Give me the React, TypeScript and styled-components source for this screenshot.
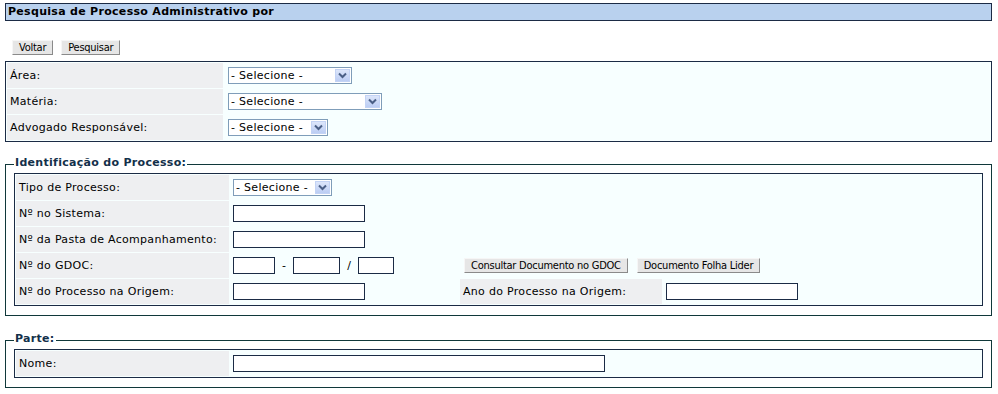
import styled, { createGlobalStyle } from 'styled-components'

const GlobalStyle = createGlobalStyle`
  body {
    margin: 0;
    background: #fff;
    font-family: "DejaVu Sans", Verdana, sans-serif;
    font-size: 11px;
    letter-spacing: 0.3px;
    color: #000;
  }
`

const Page = styled.div`
  padding: 3px 6px 0 5px;
`

const TitleBar = styled.div`
  height: 16px;
  line-height: 16px;
  padding-left: 2px;
  border: 1px solid #1b2b45;
  background: #b9d1ee;
  font-weight: bold;
`

const Toolbar = styled.div`
  display: flex;
  gap: 8px;
  margin-top: 19px;
  padding-left: 7px;
`

const Button = styled.button`
  height: 15px;
  padding: 0 6px;
  font-family: "DejaVu Sans Condensed", "Liberation Sans", sans-serif;
  font-size: 11px;
  letter-spacing: -0.25px;
  line-height: 13px;
  color: #000;
  background: #e6e6e6;
  border: 1px solid;
  border-color: #f6f6f6 #8a8a8a #8a8a8a #f6f6f6;
  border-radius: 0;
`

const FormTable = styled.div<{ $cols: string }>`
  display: grid;
  grid-template-columns: ${p => p.$cols};
  grid-auto-rows: 25px;
  gap: 1px;
  padding: 1px;
  border: 1px solid #1b2b45;
  background: #f7ffff;
`

const Label = styled.div`
  display: flex;
  align-items: center;
  padding-left: 3px;
  background: #eeeff1;
  white-space: nowrap;
`

const Cell = styled.div<{ $span?: number; $pad?: number; $gap?: number }>`
  display: flex;
  align-items: center;
  gap: ${p => p.$gap ?? 9}px;
  padding-left: ${p => p.$pad ?? 4}px;
  grid-column: ${p => (p.$span ? `span ${p.$span}` : 'auto')};
`

const Group = styled.fieldset<{ $top: number }>`
  margin: ${p => p.$top}px 0 0;
  padding: 0 8px 9px;
  border: 1px solid #10383a;
  min-width: 0;
`

const Caption = styled.legend`
  margin-left: 0;
  padding: 0 1px 4px;
  font-weight: bold;
  line-height: 13px;
  color: #13304a;
`

const SelectBox = styled.div<{ $w: number }>`
  position: relative;
  box-sizing: border-box;
  width: ${p => p.$w}px;
  height: 17px;
  line-height: 15px;
  padding-left: 2px;
  border: 1px solid #7f9db9;
  background: #fff;
`

const Arrow = styled.span`
  position: absolute;
  top: 1px;
  right: 1px;
  width: 15px;
  height: 13px;
  background: linear-gradient(#dfe8fb, #b9cbf3);
  box-shadow: inset 0 0 0 1px #c3d3f5;
  display: flex;
  align-items: center;
  justify-content: center;
`

const Field = styled.div<{ $w: number }>`
  box-sizing: border-box;
  width: ${p => p.$w}px;
  height: 17px;
  border: 1px solid #1b2b45;
  background: #fff;
`

const Sep = styled.span`
  color: #000;
`

const Select = ({ w }: { w: number }) => (
  <SelectBox $w={w}>
    - Selecione -
    <Arrow>
      <svg width="9" height="7" viewBox="0 0 9 7">
        <polyline points="1,1.5 4.5,5 8,1.5" fill="none" stroke="#4a5f86" strokeWidth="2" />
      </svg>
    </Arrow>
  </SelectBox>
)

export default function App() {
  return (
    <Page>
      <GlobalStyle />
      <TitleBar>Pesquisa de Processo Administrativo por</TitleBar>

      <Toolbar>
        <Button>Voltar</Button>
        <Button>Pesquisar</Button>
      </Toolbar>

      <div style={{ marginTop: 6 }}>
        <FormTable $cols="216px 1fr">
          <Label>Área:</Label>
          <Cell><Select w={124} /></Cell>
          <Label>Matéria:</Label>
          <Cell><Select w={154} /></Cell>
          <Label>Advogado Responsável:</Label>
          <Cell><Select w={100} /></Cell>
        </FormTable>
      </div>

      <Group $top={14}>
        <Caption>Identificação do Processo:</Caption>
        <FormTable $cols="213px 229px 202px 1fr">
          <Label>Tipo de Processo:</Label>
          <Cell $pad={3}><Select w={99} /></Cell>
          <Cell $span={2} />

          <Label>Nº no Sistema:</Label>
          <Cell $pad={3}><Field $w={132} /></Cell>
          <Cell $span={2} />

          <Label>Nº da Pasta de Acompanhamento:</Label>
          <Cell $pad={3}><Field $w={132} /></Cell>
          <Cell $span={2} />

          <Label>Nº do GDOC:</Label>
          <Cell $pad={3} $gap={7}>
            <Field $w={42} />
            <Sep>-</Sep>
            <Field $w={47} />
            <Sep>/</Sep>
            <Field $w={36} />
          </Cell>
          <Cell $span={2} $pad={4}>
            <Button>Consultar Documento no GDOC</Button>
            <Button>Documento Folha Lider</Button>
          </Cell>

          <Label>Nº do Processo na Origem:</Label>
          <Cell $pad={3}><Field $w={132} /></Cell>
          <Label>Ano do Processo na Origem:</Label>
          <Cell $pad={3}><Field $w={132} /></Cell>
        </FormTable>
      </Group>

      <Group $top={16}>
        <Caption>Parte:</Caption>
        <FormTable $cols="213px 1fr">
          <Label>Nome:</Label>
          <Cell $pad={3}><Field $w={372} /></Cell>
        </FormTable>
      </Group>
    </Page>
  )
}
